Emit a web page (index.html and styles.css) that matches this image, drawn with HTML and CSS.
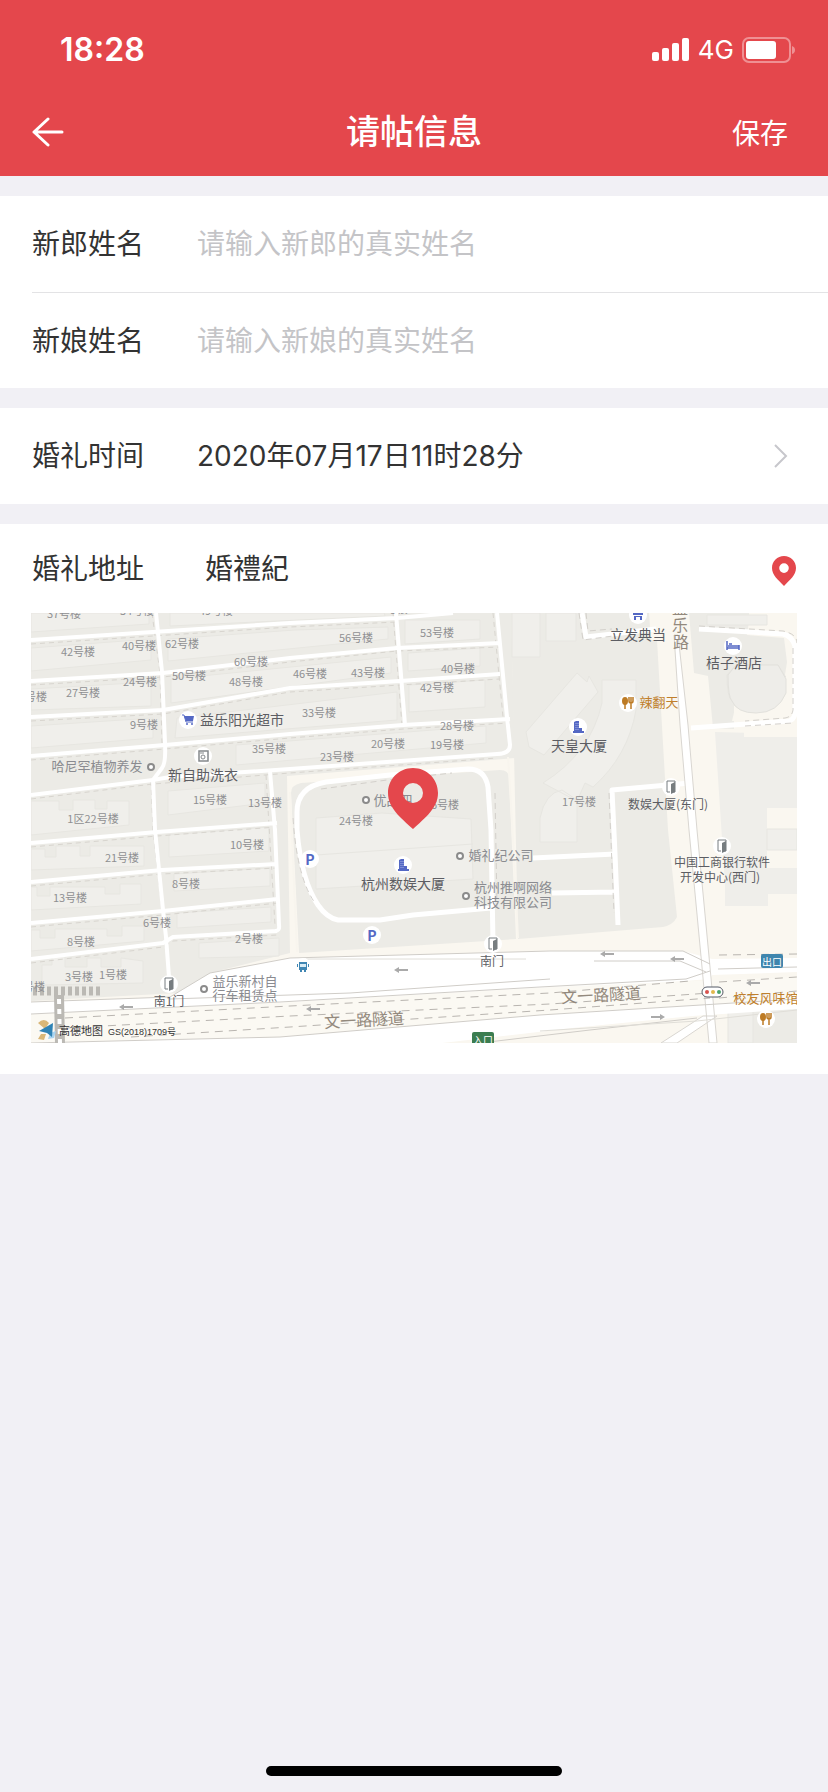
FILE: index.html
```html
<!DOCTYPE html>
<html lang="zh-CN">
<head>
    <meta charset="UTF-8">
    <meta name="viewport" content="width=device-width, initial-scale=1.0">
    <title>请帖信息</title>
    <link rel="stylesheet" href="styles.css">
</head>
<body>
    <header class="header">
        <div class="status-bar">
            <span class="time">18:28</span>
            <div class="status-icons">
                <svg width="38" height="24" viewBox="0 0 38 24" fill="#fff">
                    <rect x="0" y="14" width="7" height="9" rx="2"/>
                    <rect x="10" y="10" width="7" height="13" rx="2"/>
                    <rect x="20" y="5" width="7" height="18" rx="2"/>
                    <rect x="30" y="0" width="7" height="23" rx="2"/>
                </svg>
                <span class="network">4G</span>
                <svg width="54" height="26" viewBox="0 0 54 26">
                    <rect x="1" y="1" width="47" height="24" rx="6" fill="none" stroke="#fff" stroke-opacity=".4" stroke-width="2"/>
                    <rect x="4" y="4" width="30" height="18" rx="3" fill="#fff"/>
                    <path d="M50 9q3 1 3 4t-3 4z" fill="#fff" fill-opacity=".4"/>
                </svg>
            </div>
        </div>
        <nav class="nav-bar">
            <button class="back-btn" aria-label="返回">
                <svg width="32" height="30" viewBox="0 0 32 30" fill="none" stroke="#fff" stroke-width="3" stroke-linecap="round" stroke-linejoin="round">
                    <path d="M16 2L2 15l14 13M2 15h28"/>
                </svg>
            </button>
            <h1>请帖信息</h1>
            <button class="save-btn">保存</button>
        </nav>
    </header>

    <main>
        <section class="group">
            <div class="row">
                <label for="groomName">新郎姓名</label>
                <input type="text" id="groomName" placeholder="请输入新郎的真实姓名">
            </div>
            <div class="row row-line">
                <label for="brideName">新娘姓名</label>
                <input type="text" id="brideName" placeholder="请输入新娘的真实姓名">
            </div>
        </section>

        <section class="group">
            <div class="row">
                <label for="weddingTime">婚礼时间</label>
                <button class="time-btn" id="weddingTime">
                    <span>2020年07月17日11时28分</span>
                    <svg width="14" height="24" viewBox="0 0 14 24" fill="none" stroke="#c7c7cc" stroke-width="2">
                        <path d="M1 1l11 11L1 23"/>
                    </svg>
                </button>
            </div>
        </section>

        <section class="group">
            <div class="row address-row">
                <label for="address">婚礼地址</label>
                <input type="text" id="address" class="address-input" value="婚禮紀">
                <button class="pin-btn" aria-label="选择位置">
                    <svg width="24" height="30" viewBox="0 0 50 62">
                        <path fill="#e4474c" fill-rule="evenodd" d="M25 0C11 0 0 11 0 25c0 15 13 25 25 37 12-12 25-22 25-37C50 11 39 0 25 0zm0 15a10 10 0 1 0 0 20 10 10 0 0 0 0-20z"/>
                    </svg>
                </button>
            </div>
            <svg class="map" viewBox="0 0 766 430">
                <defs>
                    <g id="door">
                        <circle r="9" fill="#fff"/>
                        <path d="M-4-6h8V5H1M-4-6V5h3" fill="none" stroke="#777d80"/>
                        <path d="M0-3l4-2V5l-4 2z" fill="#777d80"/>
                    </g>
                    <g id="tower">
                        <circle r="9" fill="#fff"/>
                        <path d="M-4 4v-9l2-1h3V1h3v3h2v2H-5V4z" fill="#5468c4"/>
                        <path d="M-2-4v8M0-4v8" stroke="#a5b0e4" stroke-dasharray="1 1"/>
                    </g>
                    <g id="food">
                        <circle r="9" fill="#fff"/>
                        <ellipse cx="-3" cy="-2" rx="3" ry="4" fill="#bd7b24"/>
                        <path d="M-3 0v6M1-6v4q0 2 2 2t2-2v-4M3-6V6" fill="none" stroke="#bd7b24" stroke-width="1.5"/>
                    </g>
                    <g id="dot">
                        <circle r="3" fill="#fff" stroke="#8b8b8b" stroke-width="2"/>
                    </g>
                    <g id="arrow">
                        <path d="M-7 0l5-3v2h9v2h-9v2z" fill="#aaa"/>
                    </g>
                </defs>

                <rect width="766" height="430" fill="#faf7f0"/>

                <!-- blocks -->
                <g fill="#ecebe6">
                    <path d="M0 0h480l4 145-228 18 3 177-80 20-32 20L0 388z"/>
                    <path d="M260 180q0-8 10-10l199-13q9 0 9 8l7 161-217 14z"/>
                    <path d="M480 0h138l2 27 6 0 11 190 9 87q-4 8-14 10l-145 12z"/>
                    <path d="M658 0h60v8l-2 14 37 3 3 24-2 13h-11l-40 24v30l-21-1-5-52-14-3z"/>
                </g>
                <path d="M684 119l82 2v74h-30v60h30v26h-29v12h-43v-22z" fill="#efeeea"/>
                <path d="M697 385h69v45h-69z" fill="#ecebe6"/>

                <!-- buildings -->
                <g fill="#f0efeb" stroke="#e7e6e1">
                    <path d="M0 0h118v11L0 19zM139 0h214v-1l1 4-215 10zM0 35l120-9v21L0 58zM137 26l127-9 93-3v12l-220 22zM0 76l120-7v24L0 97zM140 66l220-22v16l-220 30zM0 113l122-8v20L0 135zM146 105l220-26v28l-222 18zM205 132l250-19v17l-250 22zM374 7h75v19l-75 5zM377 40l72-5v18l-72 5zM378 72l76-5v27l-76 5z"/>
                    <path d="M0 188h28v9h14v-10h22v9h12v-8h22v24L0 222zM137 178l97-8v20l-97 12zM0 236h14v8h11v-11h24v10h10v-10h54v20L0 257zM138 222l100-8v24l-100 6zM0 274h6v9h13v-9h55v7h15v-10h21v20L0 297zM143 261l96-6v18l-96 5zM146 300l94-6v15l-94 6zM0 317h9v8h15v-9h52v7h15v-10h22v15L0 338zM168 330l80-5v18l-80 2zM11 352h10v-9h13v11h22v-9h14v9h20v-9l22 3v22l-101 2z"/>
                    <path d="M285 205l66-5 89 6 2 60-157 10zM285 242l157-11M481 0h28v44h-28zM515 0h30v28h-30zM495 119l51-59 10 9 2-6 9 16-54 63-15-8zM571 67h34v30q-8 46-43 77l-8-4-8 18-34-18q48-30 59-80zM509 205q5-25 22-28l15 10v42h-37z"/>
                    <path d="M696 62l9-10h42l9 14v14q-8 20-30 20-20 0-25-12-5-4-5-26zM676 2h60v10h-60zM697 392h25v38h-25zM736 216h30v21h-30z"/>
                </g>
                <path d="M706 87l53-25h7v62h-53v-16h-12z" fill="#faf7f0"/>
                <path d="M697 62l8-10h42l8 14v14q-8 20-30 20-19 0-24-12-4-4-4-26z" fill="#eeede9" stroke="#e2e1dc"/>

                <!-- footpaths -->
                <g fill="none" stroke="#d8d5cf" stroke-dasharray="5 4">
                    <path d="M0 31l122-8 137-9 107-5M0 72l132-8 127-15 107-11 103-4M0 108l132-7 127-22 110-7 100-6M0 147l134-11 125-11 113-9 107-6M0 186l122-15 137-11 207-15"/>
                    <path d="M0 234l126-11 120-9M0 273l131-12 115-6M0 314l132-12 115-12M0 350l132-16 10-6 104-6"/>
                    <path d="M121 0l8 60 2 70M362 0l9 112M462 0l10 104M120 168l2 50 12 106M235 162l9 150"/>
                </g>

                <!-- lanes -->
                <g fill="none" stroke="#fff" stroke-width="4" stroke-linejoin="round">
                    <path d="M125 0l6 59 3 71q1 20-3 25l-9 12 2 50 8 80 3 27 3 40"/>
                    <path d="M0 27l122-8 137-9 107-5L422 0M0 68l132-8 127-15 107-10 103-5M0 104l132-7 127-22 110-7 100-7M0 143l134-11 125-11 113-9 107-6"/>
                    <path d="M0 182l122-15 17-3 120-8 207-15q13 0 13-9l-3-28L466 0M365 0l9 112"/>
                    <path d="M0 230l126-11 120-9M0 269l131-12 115-6M0 310l132-12 115-12M0 346l132-16 10-6 104-6M239 159l5 58 4 95q1 6-4 6"/>
                </g>
                <g fill="none" stroke="#fff" stroke-width="5" stroke-linejoin="round">
                    <path d="M462 330l-2-113-3-43q-3-18-20-18l-78 6-64 7q-29 5-29 30v18q4 50 21 75 9 13 20 15h42l33-5 78-7"/>
                    <path d="M502 245l82-4M521 280l65-1M659 170l-78 7 3 64 3 71"/>
                    <path d="M551 0l4 24 70-8M660 115l98-7q6-2 6-9V33q-3-10-12-12l-84-5"/>
                </g>
                <g fill="none" stroke="#d3d0cb" stroke-dasharray="6 4">
                    <path d="M548 0l4 27 30-4M555 0l2 18 24-2M668 13l84 5q14 3 14 12M762 35v62q-1 7-8 8l-40 3M714 113l48-3M290 176l66-9 65-7M578 180l5 120M262 205q4 60 22 85M464 180l2 115"/>
                </g>
                <path d="M477 144l4 63 6 118M259 179l7 160" fill="none" stroke="#f8f5ee" stroke-width="2"/>

                <!-- trunk roads -->
                <path d="M0 389l139-5 20-12 20-12 80-15 260-7h133l29 8 85-1v14l-85 3-2 4-160 12-270 13-249 14z" fill="#fff"/>
                <path d="M0 401l259-12 260-15 247-10v22l-247 17-270 22L0 430z" fill="#fbf9f3"/>
                <path d="M0 430l249-6 260-22 257-16v10l-105 7-120 12-130 15z" fill="#fff"/>
                <path d="M630 430l42-27h14l-40 27zM647 22l10 90 9 105 13 137 7 76h-8l-7-76-13-137-9-105-6-90z" fill="#fff" stroke="#d9d6d1"/>
                <path d="M679 358l-24 8-146 8-260 15-249 12M0 389l139-5 20-12 20-12M179 360l80-15M259 345l260-7h133l27 13M563 348h86l26 11M687 356l79-2M139 386l180-6 200-14M0 430l249-6 260-22 258-16M449 430l110-13 107-12" fill="none" stroke="#d0cdc8"/>
                <path d="M275 346l220 0M509 418l157-10 100-11" fill="none" stroke="#e0ded8"/>
                <g fill="none" stroke="#b9b5b0" stroke-dasharray="8 6">
                    <path d="M34 405l225-12 260-13 140-12M35 415l224-12 260-12 160-11M100 424l159-10 260-17 160-12M688 369l78-5M688 385l78-7M688 342l78-1"/>
                </g>
                <path d="M2 378h70" stroke="#bbb9b4" stroke-width="9" stroke-dasharray="4 3"/>
                <path d="M28 382l1 48" stroke="#bbb9b4" stroke-width="10"/>
                <path d="M28 386l1 44" stroke="#fff" stroke-width="4" stroke-dasharray="5 5"/>

                <use href="#arrow" x="95" y="394"/>
                <use href="#arrow" x="282" y="396"/>
                <use href="#arrow" x="370" y="357"/>
                <use href="#arrow" x="576" y="341"/>
                <use href="#arrow" x="646" y="346"/>
                <use href="#arrow" x="722" y="370"/>
                <use href="#arrow" transform="translate(627 404) rotate(180)"/>

                <!-- building numbers -->
                <g class="map-no">
                    <text x="33" y="0">37号楼</text>
                    <text x="106" y="-3">54号楼</text>
                    <text x="185" y="-3">49号楼</text>
                    <text x="360" y="-5">55号楼</text>
                    <text x="47" y="38">42号楼</text>
                    <text x="108" y="32">40号楼</text>
                    <text x="151" y="30">62号楼</text>
                    <text x="220" y="48">60号楼</text>
                    <text x="109" y="68">24号楼</text>
                    <text x="158" y="62">50号楼</text>
                    <text x="215" y="68">48号楼</text>
                    <text x="2" y="83">1号楼</text>
                    <text x="52" y="79">27号楼</text>
                    <text x="113" y="111">9号楼</text>
                    <text x="238" y="135">35号楼</text>
                    <text x="179" y="186">15号楼</text>
                    <text x="234" y="189">13号楼</text>
                    <text x="62" y="205">1区22号楼</text>
                    <text x="325" y="24">56号楼</text>
                    <text x="406" y="19">53号楼</text>
                    <text x="279" y="60">46号楼</text>
                    <text x="337" y="59">43号楼</text>
                    <text x="427" y="55">40号楼</text>
                    <text x="406" y="74">42号楼</text>
                    <text x="288" y="99">33号楼</text>
                    <text x="426" y="112">28号楼</text>
                    <text x="357" y="130">20号楼</text>
                    <text x="416" y="131">19号楼</text>
                    <text x="306" y="143">23号楼</text>
                    <text x="325" y="207">24号楼</text>
                    <text x="411" y="191">26号楼</text>
                    <text x="548" y="188">17号楼</text>
                    <text x="216" y="231">10号楼</text>
                    <text x="91" y="244">21号楼</text>
                    <text x="155" y="270">8号楼</text>
                    <text x="39" y="284">13号楼</text>
                    <text x="126" y="309">6号楼</text>
                    <text x="50" y="328">8号楼</text>
                    <text x="218" y="325">2号楼</text>
                    <text x="48" y="363">3号楼</text>
                    <text x="82" y="361">1号楼</text>
                    <text x="0" y="373">5号楼</text>
                </g>

                <!-- places -->
                <g class="map-minor">
                    <text x="66" y="152">哈尼罕植物养发</text>
                    <text x="362" y="186">优品四</text>
                    <text x="470" y="241">婚礼纪公司</text>
                    <text x="482" y="273">杭州推啊网络</text>
                    <text x="482" y="288">科技有限公司</text>
                    <text x="214" y="367">益乐新村自</text>
                    <text x="214" y="381">行车租赁点</text>
                </g>
                <g class="map-place">
                    <text x="211" y="106">益乐阳光超市</text>
                    <text x="172" y="161">新自助洗衣</text>
                    <text x="607" y="21">立发典当</text>
                    <text x="703" y="49">桔子酒店</text>
                    <text x="548" y="132">天皇大厦</text>
                    <text x="372" y="270">杭州数娱大厦</text>
                </g>
                <g class="map-gate">
                    <text x="637" y="190">数娱大厦(东门)</text>
                    <text x="691" y="248">中国工商银行软件</text>
                    <text x="689" y="263">开发中心(西门)</text>
                    <text x="461" y="347">南门</text>
                    <text x="138" y="387">南1门</text>
                </g>
                <g class="map-food">
                    <text x="628" y="88">辣翻天</text>
                    <text x="735" y="384">校友风味馆</text>
                </g>
                <g class="map-road">
                    <text x="649" y="-6">益</text>
                    <text x="649" y="11">乐</text>
                    <text x="650" y="28">路</text>
                    <text transform="translate(333 406) rotate(-3)">文一路隧道</text>
                    <text transform="translate(570 381) rotate(-3)">文一路隧道</text>
                </g>

                <!-- markers -->
                <use href="#dot" x="120" y="154"/>
                <use href="#dot" x="335" y="187"/>
                <use href="#dot" x="429" y="243"/>
                <use href="#dot" x="435" y="283"/>
                <use href="#dot" x="173" y="376"/>
                <use href="#door" x="640" y="174"/>
                <use href="#door" x="691" y="233"/>
                <use href="#door" x="462" y="331"/>
                <use href="#door" x="138" y="371"/>
                <use href="#tower" x="547" y="114"/>
                <use href="#tower" x="372" y="252"/>
                <use href="#food" x="597" y="90"/>
                <use href="#food" x="735" y="406"/>
                <g transform="translate(157 107)">
                    <circle r="9" fill="#fff"/>
                    <path d="M-6-5h2l2 7h7" fill="none" stroke="#5468c4"/>
                    <path d="M-4-4H6L5 1h-7z" fill="#5468c4"/>
                    <circle cx="-1" cy="4" r="1" fill="#5468c4"/>
                    <circle cx="4" cy="4" r="1" fill="#5468c4"/>
                </g>
                <g transform="translate(172 143)">
                    <circle r="9" fill="#fff"/>
                    <rect x="-4" y="-5" width="9" height="10" fill="none" stroke="#85898c" stroke-width="1.5"/>
                    <circle cx="0" cy="1" r="2" fill="none" stroke="#85898c"/>
                    <path d="M-3-3h4" stroke="#85898c"/>
                </g>
                <g transform="translate(607 2)">
                    <circle r="9" fill="#fff"/>
                    <path d="M-5-4H5V0H-5zM-4 1h8v4H2V2h-4v3h-2z" fill="#5468c4"/>
                </g>
                <g transform="translate(702 33)">
                    <circle r="9" fill="#fff"/>
                    <path d="M-6-5v9M-6 2H6M6-1v5M-5 0H6M-4-2h3" fill="none" stroke="#5468c4" stroke-width="1.5"/>
                </g>
                <g transform="translate(272 354)">
                    <circle r="9" fill="#fff"/>
                    <path d="M-4-5h8v8h-1v2H1V3h-2v2h-2V3h-1zM-6-3h1v3h-1zM5-3h1v3H5z" fill="#3f86b3"/>
                    <path d="M-3-3h6v3h-6z" fill="#d9edf7"/>
                </g>
                <g class="map-parking">
                    <circle cx="279" cy="246" r="9"/>
                    <text x="279" y="246">P</text>
                    <circle cx="341" cy="322" r="9"/>
                    <text x="341" y="322">P</text>
                </g>
                <g class="map-sign">
                    <rect x="730" y="341" width="22" height="14" rx="2" fill="#3f86ae"/>
                    <text x="741" y="348">出口</text>
                    <rect x="441" y="419" width="22" height="14" rx="2" fill="#3b7d50"/>
                    <text x="452" y="426">入口</text>
                </g>
                <g transform="translate(681 379)">
                    <rect x="-10" y="-5" width="21" height="10" rx="5" fill="#fff" stroke="#555a66"/>
                    <circle cx="-5" r="2" fill="#d9534f"/>
                    <circle r="2" cx="1" fill="#e2b84c"/>
                    <circle cx="7" r="2" fill="#4ba36c"/>
                </g>

                <!-- map provider -->
                <path d="M7 410q6-6 11 0l-4 6zM10 421l5 0-2 6-6-1z" fill="#d9b778"/>
                <path d="M19 420l6-2-2 7-6 1z" fill="#a9d4f0"/>
                <path d="M8 418l14-8-1 14-5-4z" fill="#2f83b5"/>
                <g class="map-copyright">
                    <text x="28" y="418" class="map-brand">高德地图</text>
                    <text x="77" y="419">GS(2018)1709号</text>
                </g>

                <path transform="translate(357 155)" fill="#e4474c" fill-rule="evenodd" d="M25 0C11 0 0 11 0 25c0 15 13 25 25 36 12-11 25-21 25-36C50 11 39 0 25 0zm0 15a10 10 0 1 0 0 20 10 10 0 0 0 0-20z"/>
            </svg>
        </section>
    </main>

    <div class="home-indicator"></div>
</body>
</html>
```
FILE: styles.css
```css
* {
    box-sizing: border-box;
}
body {
    display: flex;
    flex-direction: column;
    min-height: 100vh;
    margin: 0;
    background: #f1f0f5;
    color: #333;
    font-family: Inter, "Noto Sans CJK SC", sans-serif;
    font-size: 28px;
    line-height: 40px;
}
button, input {
    padding: 0;
    border: none;
    background: none;
    color: inherit;
    font: inherit;
}
button {
    cursor: pointer;
}
svg {
    display: block;
}
.header {
    background: #e4474c;
    color: #fff;
}
.status-bar {
    display: flex;
    justify-content: space-between;
    align-items: center;
    height: 88px;
    padding: 12px 32px 0 60px;
}
.time {
    font-size: 32px;
    font-weight: 600;
}
.status-icons {
    display: flex;
    align-items: center;
    gap: 8px;
}
.network {
    font-size: 26px;
}
.nav-bar {
    display: grid;
    grid-template-columns: 1fr auto 1fr;
    align-items: center;
    height: 88px;
    padding: 0 32px;
}
.back-btn {
    justify-self: start;
}
.nav-bar h1 {
    margin: 0;
    font-size: 34px;
    font-weight: 500;
}
.save-btn {
    justify-self: end;
    padding: 4px 8px 0;
}
.group {
    margin-top: 20px;
    background: #fff;
}
.row {
    display: flex;
    align-items: center;
    height: 96px;
    margin-left: 32px;
    padding-right: 32px;
}
.row-line {
    border-top: 1px solid #e3e3e5;
}
.row label {
    width: 165px;
}
.row input {
    flex: 1;
    min-width: 0;
    outline: none;
}
.row input::placeholder {
    color: #c4c4c7;
    opacity: 1;
}
.time-btn {
    flex: 1;
    display: flex;
    justify-content: space-between;
    align-items: center;
    padding-right: 8px;
}
.address-row {
    height: 89px;
}
.row .address-input {
    padding-left: 8px;
}
.pin-btn {
    padding-top: 4px;
}
.map {
    width: calc(100% - 62px);
    margin: 0 31px;
    padding-bottom: 31px;
    box-sizing: content-box;
}
.map text {
    text-anchor: middle;
    dominant-baseline: central;
    font-family: "Noto Sans CJK SC", sans-serif;
}
.map-no {
    font-size: 11px;
    fill: #8f8f92;
}
.map-minor {
    font-size: 13px;
    fill: #8a8b90;
}
.map-place {
    font-size: 14px;
    fill: #5c5d63;
}
.map-gate {
    font-size: 12px;
    fill: #5c5d63;
}
.map-food {
    font-size: 13px;
    fill: #c07f2c;
}
.map-road {
    font-size: 16px;
    fill: #93897d;
}
.map-parking {
    font-size: 14px;
    font-weight: 700;
    fill: #5468c4;
}
.map-parking circle {
    fill: #fff;
}
.map-sign {
    font-size: 10px;
}
.map-sign text {
    fill: #fff;
}
.map .map-copyright text {
    font-family: "Liberation Sans", "Noto Sans CJK SC", sans-serif;
    font-size: 9px;
    text-anchor: start;
    fill: #333;
}
.map .map-copyright .map-brand {
    font-size: 11px;
}
.home-indicator {
    width: 296px;
    height: 10px;
    margin: auto auto 16px;
    border-radius: 5px;
    background: #000;
}
```
